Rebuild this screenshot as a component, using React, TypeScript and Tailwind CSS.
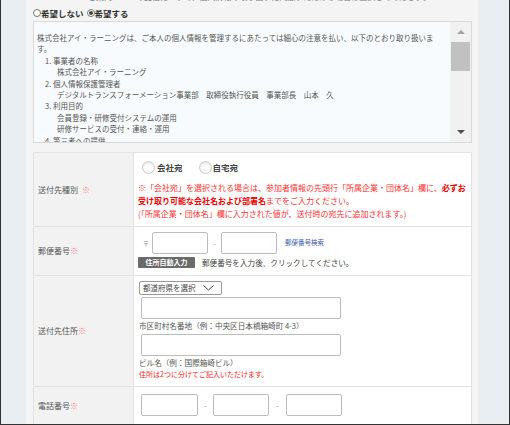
const JP = "font-['Noto_Sans_CJK_JP','Noto_Sans',sans-serif]";

function FakeRadio({ checked = false }: { checked?: boolean }) {
  return (
    <span className="w-[8px] h-[8px] rounded-full border border-[#777] bg-white flex items-center justify-center shrink-0">
      {checked && <span className="w-[4px] h-[4px] rounded-full bg-[#444]" />}
    </span>
  );
}

function BigRadio() {
  return (
    <span className="w-[13px] h-[13px] rounded-full border border-[#cccccc] bg-[#fbfbfb] shadow-[inset_0_1px_2px_rgba(0,0,0,0.1)] shrink-0" />
  );
}

function Input({ w }: { w: string }) {
  return <div className={`${w} h-[22px] border border-[#bdbdbd] rounded-[2px] bg-white shrink-0`} />;
}

function Label({ text, space = false }: { text: string; space?: boolean }) {
  return (
    <div className="w-[100px] shrink-0 bg-[#f2f2f2] border-r border-[#e3e3e3] flex items-center pl-[4px] text-[8px] text-[#555]">
      {text}
      {space && <span className="w-[4px]" />}
      <span className="text-[#f77]">※</span>
    </div>
  );
}

const AGREEMENT = [
  { pl: "pl-0", t: "株式会社アイ・ラーニングは、ご本人の個人情報を管理するにあたっては細心の注意を払い、以下のとおり取り扱いま" },
  { pl: "pl-0", t: "す。" },
  { pl: "pl-[8px]", t: "1. 事業者の名称" },
  { pl: "pl-[20px]", t: "株式会社アイ・ラーニング" },
  { pl: "pl-[8px]", t: "2. 個人情報保護管理者" },
  { pl: "pl-[20px]", t: "デジタルトランスフォーメーション事業部　取締役執行役員　事業部長　山本　久" },
  { pl: "pl-[8px]", t: "3. 利用目的" },
  { pl: "pl-[20px]", t: "会員登録・研修受付システムの運用" },
  { pl: "pl-[20px]", t: "研修サービスの受付・連絡・運用" },
  { pl: "pl-[8px]", t: "4. 第三者への提供" },
];

export default function App() {
  return (
    <div className={`w-[510px] h-[425px] overflow-hidden bg-[#e9eef2] border-x border-b border-[#333] flex ${JP}`}>
      <div className="ml-[25px] w-[452px] h-full bg-[#f4f4f4] pl-[7px] pr-[6px] flex flex-col">
        {/* line above, scrolled mostly out of view */}
        <div className="h-[5px] overflow-hidden relative shrink-0">
          <div className="absolute top-[-8px] left-[55px] text-[8px] leading-[10px] text-[#777] whitespace-nowrap">
            ご案内メールの受信について、個人情報の取り扱いに同意いただける場合は選択してください。
          </div>
        </div>

        {/* radio row */}
        <div className="h-[16px] flex items-center text-[8.5px] font-bold text-[#333] shrink-0">
          <FakeRadio />
          <span>希望しない</span>
          <span className="w-[3px]" />
          <FakeRadio checked />
          <span>希望する</span>
        </div>

        {/* agreement box */}
        <div className="h-[122px] border border-[#dadada] bg-[#f8fbfe] flex shrink-0">
          <div className="flex-1 overflow-hidden pt-[10px] pl-[3px] text-[7.5px] leading-[11.4px] text-[#555]">
            {AGREEMENT.map((l, i) => (
              <div key={i} className={`${l.pl} whitespace-nowrap`}>
                {l.t}
              </div>
            ))}
          </div>
          <div className="w-[21px] bg-[#f1f1f1] flex flex-col shrink-0">
            <div className="h-[20px] flex items-center justify-center">
              <div className="w-0 h-0 border-x-[4px] border-x-transparent border-b-[4px] border-b-[#a3a3a3]" />
            </div>
            <div className="h-[29px] mx-[1px] bg-[#c1c1c1]" />
            <div className="flex-1" />
            <div className="h-[20px] flex items-center justify-center">
              <div className="w-0 h-0 border-x-[4px] border-x-transparent border-t-[4px] border-t-[#505050]" />
            </div>
          </div>
        </div>

        {/* form table */}
        <div className="mt-[9px] border border-[#e3e3e3] bg-white flex flex-col">
          {/* 送付先種別 */}
          <div className="flex border-b border-[#e3e3e3] h-[74px]">
            <Label text="送付先種別" space />
            <div className="flex-1 pl-[4px] pt-[7px]">
              <div className="h-[14px] flex items-center text-[8.5px] font-bold text-[#444]">
                <span className="ml-[4px]" />
                <BigRadio />
                <span className="ml-[2px]">会社宛</span>
                <span className="ml-[16px]" />
                <BigRadio />
                <span className="ml-[1px]">自宅宛</span>
              </div>
              <div className="mt-[7px] text-[8px] leading-[13px] text-[#f33] whitespace-nowrap">
                <div>
                  ※「会社宛」を選択される場合は、参加者情報の先頭行「所属企業・団体名」欄に、
                  <span className="font-bold text-[#e00]">必ずお</span>
                </div>
                <div>
                  <span className="font-bold text-[#e00]">受け取り可能な会社名および部署名</span>までをご入力ください。
                </div>
                <div>(「所属企業・団体名」欄に入力された値が、送付時の宛先に追加されます。)</div>
              </div>
            </div>
          </div>

          {/* 郵便番号 */}
          <div className="flex border-b border-[#e3e3e3] h-[49px]">
            <Label text="郵便番号" />
            <div className="flex-1 pl-[4px] pt-[5px]">
              <div className="flex items-center">
                <span className="w-[14px] pl-[5px] text-[6px] text-[#777]">〒</span>
                <Input w="w-[56px]" />
                <span className="w-[13px] text-center text-[7px] text-[#777]">-</span>
                <Input w="w-[56px]" />
                <span className="ml-[8px] text-[6.5px] text-[#3b5bab]">郵便番号検索</span>
              </div>
              <div className="mt-[3px] flex items-center">
                <span className="w-[57px] h-[11px] bg-[#6a6a6a] rounded-[1px] flex items-center justify-center text-[7px] font-bold text-white">
                  住所自動入力
                </span>
                <span className="ml-[7px] text-[7.6px] text-[#444]">郵便番号を入力後、クリックしてください。</span>
              </div>
            </div>
          </div>

          {/* 送付先住所 */}
          <div className="flex border-b border-[#e3e3e3] h-[111px]">
            <Label text="送付先住所" />
            <div className="flex-1 pl-[4px] pt-[5px] flex flex-col items-start">
              <div className="ml-[1px] w-[83px] h-[14px] border border-[#999] rounded-[2px] bg-white flex items-center pl-[3px] text-[7.5px] text-[#444]">
                都道府県を選択
                <svg className="ml-[7px]" width="11" height="6" viewBox="0 0 11 6">
                  <path d="M0.5 0.5 L5.5 5 L10.5 0.5" fill="none" stroke="#444" strokeWidth="1" />
                </svg>
              </div>
              <div className="mt-[2px] ml-[3px]">
                <Input w="w-[200px]" />
              </div>
              <div className="text-[7.6px] leading-[13px] text-[#555] ml-[1px]">市区町村名番地（例：中央区日本橋箱崎町 4-3）</div>
              <div className="mt-[2px] ml-[3px]">
                <Input w="w-[200px]" />
              </div>
              <div className="text-[7.6px] leading-[13px] text-[#555] ml-[1px]">ビル名（例：国際箱崎ビル）</div>
              <div className="text-[7px] leading-[10px] text-[#f22] ml-[1px]">住所は2つに分けてご記入いただけます。</div>
            </div>
          </div>

          {/* 電話番号 */}
          <div className="flex h-[37px]">
            <Label text="電話番号" />
            <div className="flex-1 pl-[7px] pt-[7px] flex items-start">
              <Input w="w-[57px]" />
              <span className="w-[15px] h-[22px] flex items-center justify-center text-[7px] text-[#777]">-</span>
              <Input w="w-[56px]" />
              <span className="w-[17px] h-[22px] flex items-center justify-center text-[7px] text-[#777]">-</span>
              <Input w="w-[56px]" />
            </div>
          </div>
        </div>
      </div>
    </div>
  );
}
